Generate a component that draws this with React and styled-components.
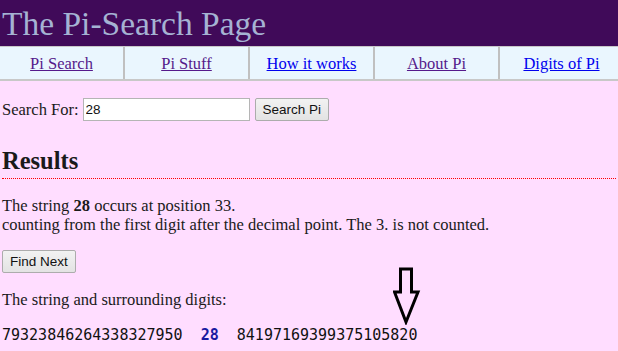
import React from "react";
import styled, { createGlobalStyle } from "styled-components";

const GlobalStyle = createGlobalStyle`
  html, body {
    margin: 0;
    padding: 0;
    background: #ffddff;
    font-family: "Liberation Serif", "Times New Roman", serif;
    font-size: 16.5px;
    color: #1a1a1a;
    overflow: hidden;
  }
`;

const navItems = [
  { label: "Pi Search", visited: true },
  { label: "Pi Stuff", visited: true },
  { label: "How it works", visited: false },
  { label: "About Pi", visited: true },
  { label: "Digits of Pi", visited: false },
];

function Arrow() {
  return (
    <svg width="30" height="58" viewBox="0 0 30 58">
      <path
        d="M7.5 2 H18.5 V25 H25 L13 55 L1.5 25 H7.5 Z"
        fill="none"
        stroke="#000"
        strokeWidth="3"
        strokeLinejoin="miter"
      />
    </svg>
  );
}

function App() {
  return (
    <Page>
      <GlobalStyle />
      <Header>
        <Title>The Pi-Search Page</Title>
      </Header>
      <Nav>
        {navItems.map((item) => (
          <NavCell key={item.label}>
            <NavLink href="#" $visited={item.visited}>
              {item.label}
            </NavLink>
          </NavCell>
        ))}
      </Nav>
      <Main>
        <SearchRow>
          <Label>Search For:</Label>
          <Input defaultValue="28" />
          <Button>Search Pi</Button>
        </SearchRow>
        <H2>Results</H2>
        <Para>
          The string <b>28</b> occurs at position 33.
          <br />
          counting from the first digit after the decimal point. The 3. is not counted.
        </Para>
        <Button>Find Next</Button>
        <Para>The string and surrounding digits:</Para>
        <Digits>
          79323846264338327950&nbsp;&nbsp;<Match>28</Match>&nbsp;&nbsp;84197169399375105820
          <ArrowWrap>
            <Arrow />
          </ArrowWrap>
        </Digits>
      </Main>
    </Page>
  );
}

const Page = styled.div`
  width: 618px;
  height: 351px;
  overflow: hidden;
`;

const Header = styled.header`
  background: #400a59;
  height: 46px;
  display: flex;
  align-items: center;
  padding: 0 2px;
`;

const Title = styled.h1`
  margin: 0;
  font-weight: normal;
  font-size: 33.5px;
  color: #a5b3d3;
  line-height: 1;
  padding-top: 2px;
`;

const Nav = styled.nav`
  display: flex;
  width: 630px;
  background: #eaf6fe;
  border-top: 1px solid #c8c8c8;
  border-bottom: 2px solid #c8c8c8;
`;

const NavCell = styled.div`
  width: 125px;
  height: 32px;
  display: flex;
  align-items: center;
  justify-content: center;
  border-right: 2px solid #c0c0c0;
  box-sizing: border-box;
  padding-top: 2px;
`;

const NavLink = styled.a`
  color: ${(p) => (p.$visited ? "#551a8b" : "#0000ee")};
  text-decoration: underline;
`;

const Main = styled.main`
  padding: 0 2px;
`;

const SearchRow = styled.div`
  display: flex;
  align-items: center;
  gap: 4px;
  margin-top: 17px;
`;

const Label = styled.span``;

const Input = styled.input`
  width: 161px;
  height: 19px;
  border: 1px solid #b5b5b5;
  padding: 1px 2px;
  font-family: "Liberation Sans", Arial, sans-serif;
  font-size: 13.5px;
  color: #111;
  background: #fff;
  margin-right: 1px;
`;

const Button = styled.button`
  font-family: "Liberation Sans", Arial, sans-serif;
  font-size: 13.5px;
  color: #111;
  height: 23px;
  padding: 0 7px;
  border: 1px solid #acacac;
  border-radius: 2px;
  background: linear-gradient(#f2f2f2, #e3e3e3);
`;

const H2 = styled.h2`
  margin: 25px 0 0;
  font-size: 24.5px;
  line-height: 30px;
  padding-bottom: 2px;
  border-bottom: 1px dotted #ff0000;
`;

const Para = styled.p`
  margin: 17px 0 16px;
  line-height: 19px;
`;

const Digits = styled.div`
  position: relative;
  margin-top: 17px;
  font-family: "DejaVu Sans Mono", monospace;
  font-size: 15px;
  color: #111;
  white-space: nowrap;
`;

const Match = styled.span`
  color: #1a1aa0;
  font-weight: bold;
`;

const ArrowWrap = styled.div`
  position: absolute;
  left: 391px;
  top: -59px;
`;

export default App;
